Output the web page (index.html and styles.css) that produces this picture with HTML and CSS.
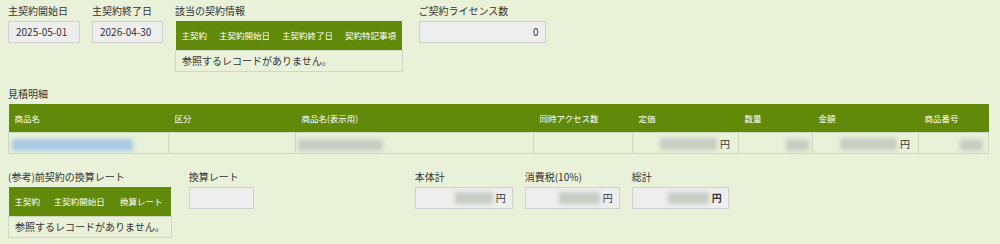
FILE: index.html
```html
<!DOCTYPE html>
<html lang="ja">
<head>
  <meta charset="UTF-8" />
  <title>見積明細</title>
  <link rel="stylesheet" href="styles.css">
</head>
<body>
  <div class="row top">
    <div class="field">
      <label>主契約開始日</label>
      <div class="box w72">2025-05-01</div>
    </div>
    <div class="field">
      <label>主契約終了日</label>
      <div class="box w71">2026-04-30</div>
    </div>
    <div class="field">
      <label>該当の契約情報</label>
      <table class="grid">
        <tr><th>主契約</th><th>主契約開始日</th><th>主契約終了日</th><th>契約特記事項</th></tr>
        <tr><td colspan="4" class="empty">参照するレコードがありません。</td></tr>
      </table>
    </div>
    <div class="field lic">
      <label>ご契約ライセンス数</label>
      <div class="box w127 num">0</div>
    </div>
  </div>

  <div class="section">
    <label>見積明細</label>
    <table class="grid detail">
      <colgroup>
        <col style="width:160px"><col style="width:127px"><col style="width:238px"><col style="width:99px">
        <col style="width:106px"><col style="width:74px"><col style="width:106px"><col style="width:70px">
      </colgroup>
      <tr>
        <th>商品名</th><th>区分</th><th>商品名(表示用)</th><th>同時アクセス数</th>
        <th>定価</th><th>数量</th><th>金額</th><th>商品番号</th>
      </tr>
      <tr>
        <td class="first"><span class="blur link" style="width:121px"></span></td>
        <td></td>
        <td class="name"><span class="blur" style="width:85px"></span></td>
        <td></td>
        <td class="num pr8"><span class="blur" style="width:57px"></span><span class="yen">円</span></td>
        <td class="num pr3"><span class="blur" style="width:23px"></span></td>
        <td class="num pr8"><span class="blur" style="width:57px"></span><span class="yen">円</span></td>
        <td class="num pr5"><span class="blur" style="width:23px"></span></td>
      </tr>
    </table>
  </div>

  <div class="row bottom">
    <div class="field">
      <label>(参考)前契約の換算レート</label>
      <table class="grid">
        <tr><th>主契約</th><th>主契約開始日</th><th>換算レート</th></tr>
        <tr><td colspan="3" class="empty">参照するレコードがありません。</td></tr>
      </table>
    </div>
    <div class="field rate">
      <label>換算レート</label>
      <div class="box w65"></div>
    </div>
    <div class="field sum">
      <label>本体計</label>
      <div class="box w98 num money"><span class="blur" style="width:38px"></span><span class="yen">円</span></div>
    </div>
    <div class="field">
      <label>消費税(10%)</label>
      <div class="box w95 num money"><span class="blur" style="width:41px"></span><span class="yen">円</span></div>
    </div>
    <div class="field">
      <label>総計</label>
      <div class="box w97 num money"><span class="blur" style="width:41px"></span><span class="yen bold">円</span></div>
    </div>
  </div>
</body>
</html>
```

FILE: styles.css
```css
*{box-sizing:border-box;}
body{margin:0;padding:4px 8px;background:#e9f2d9;font-family:"Noto Sans CJK JP","Noto Sans",sans-serif;font-size:10px;color:#333;}

.row{display:flex;gap:12px;align-items:flex-start;}
.field label,.section label{display:block;height:17px;line-height:14px;white-space:nowrap;}
.lic{margin-left:4px;}
.rate{margin-left:5px;}
.sum{margin-left:149px;}

.box{height:22px;border:1px solid #d0d0d0;background:#eeeeee;padding:0 7px;line-height:20px;white-space:nowrap;}
.box.num{text-align:right;padding-right:6px;}
.w72{width:72px;}
.w71{width:71px;}
.w127{width:127px;}
.w65{width:65px;}
.w98{width:98px;}
.w95{width:95px;}
.w97{width:97px;}
.money{display:flex;align-items:center;justify-content:flex-end;gap:3px;}

.section{margin-top:15px;}
.bottom{margin-top:16px;}

.grid{border-collapse:collapse;}
.grid th{background:#618a0b;color:#fff;font-weight:normal;font-size:8.5px;text-align:left;padding:0 6px;height:29px;white-space:nowrap;}
.grid td{height:21px;border:1px solid #cfd7c4;padding:0 6px;white-space:nowrap;}
.grid td.empty{color:#333;}

.detail{width:980px;table-layout:fixed;}
.detail td.first{padding-left:3px;}
.detail td.name{padding-left:2px;}
.detail td.num{text-align:right;}
.pr8{padding-right:8px !important;}
.pr3{padding-right:3px !important;}
.pr5{padding-right:5px !important;}

.blur{display:inline-block;height:12px;vertical-align:middle;background:#c9cdc4;filter:blur(2px);}
.blur.link{background:#a9c9e2;}
.yen{font-size:10px;vertical-align:middle;margin-left:3px;}
.money .yen{margin-left:0;}
.bold{font-weight:bold;}
```
